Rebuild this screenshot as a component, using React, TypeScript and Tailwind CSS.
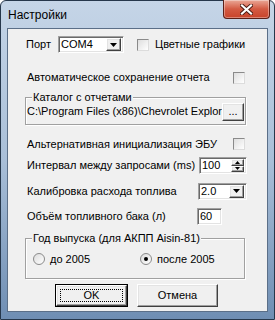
export default function App() {
  const sunken =
    "border border-t-[#a0a0a0] border-l-[#a0a0a0] border-r-white border-b-white shadow-[inset_1px_1px_0_#696969,inset_-1px_-1px_0_#e3e3e3] bg-white"
  const raised =
    "border border-t-white border-l-white border-r-[#404040] border-b-[#404040] shadow-[inset_-1px_-1px_0_#a0a0a0,inset_1px_1px_0_#e3e3e3] bg-[#f0f0f0]"
  const check =
    "w-[12px] h-[12px] border border-t-[#8a8a8a] border-l-[#8a8a8a] border-r-[#dcdcdc] border-b-[#dcdcdc] bg-gradient-to-br from-[#dedede] to-white"

  return (
    <div className="w-[275px] h-[320px] flex flex-col rounded-t-[6px] border border-[#26374b] bg-gradient-to-b from-[#c5d5e7] via-[#a9bfd8] to-[#6f8eb3] font-['Liberation_Sans',Arial,sans-serif] text-[11px] leading-none text-black">
      {/* Title bar */}
      <div className="relative h-[27px] flex items-center pl-[7px]">
        <span className="text-[12px] text-black">Настройки</span>
        <div className="absolute top-[-1px] right-[4px] w-[47px] h-[19px] rounded-b-[4px] border border-t-0 border-[#5b2018] bg-gradient-to-b from-[#e9a797] via-[#d35a43] to-[#c8432a] flex items-center justify-center shadow-[inset_0_0_0_1px_rgba(255,255,255,0.35)]">
          <svg width="13" height="11" viewBox="0 0 13 11">
            <path d="M2 1.5 L11 9.5 M11 1.5 L2 9.5" stroke="#4a1a12" strokeWidth="4" strokeLinecap="square" />
            <path d="M2 1.5 L11 9.5 M11 1.5 L2 9.5" stroke="white" strokeWidth="2.2" strokeLinecap="square" />
          </svg>
        </div>
      </div>

      {/* Client area */}
      <div className="mx-[6px] mb-[7px] flex-1 border border-[#5b6f88] bg-[#f0f0f0] flex flex-col">
        {/* Port row */}
        <div className="mt-[7px] h-[17px] flex items-center pl-[18px]">
          <span className="w-[32px]">Порт</span>
          <div className={`${sunken} w-[66px] h-[17px] flex items-center justify-between pl-[2px] pr-[2px]`}>
            <span>COM4</span>
            <div className={`${raised} w-[15px] h-[13px] flex items-center justify-center`}>
              <svg width="7" height="4" viewBox="0 0 7 4"><path d="M0 0 H7 L3.5 4 Z" fill="black" /></svg>
            </div>
          </div>
          <div className={`${check} ml-[13px]`} />
          <span className="ml-[6px]">Цветные графики</span>
        </div>

        {/* Auto save */}
        <div className="mt-[18px] h-[13px] flex items-center justify-between pl-[19px] pr-[22px]">
          <span>Автоматическое сохранение отчета</span>
          <div className={check} />
        </div>

        {/* Catalog group */}
        <div className="mt-[13px] ml-[17px] w-[221px] h-[28px] border border-[#a0a0a0] shadow-[inset_1px_1px_0_white,1px_1px_0_white] flex flex-col">
          <span className="-mt-[7px] ml-[6px] self-start bg-[#f0f0f0] px-[1px] h-[12px] leading-[12px]">Каталог с отчетами</span>
          <div className="h-[17px] flex items-center pl-[1px]">
            <span className="w-[195px] overflow-hidden whitespace-nowrap">C:\Program Files (x86)\Chevrolet Explorer</span>
            <div className={`${raised} w-[22px] h-[18px] flex items-center justify-center`}>...</div>
          </div>
        </div>

        {/* Alt init */}
        <div className="mt-[13px] h-[12px] flex items-center justify-between pl-[19px] pr-[22px]">
          <span>Альтернативная инициализация ЭБУ</span>
          <div className={check} />
        </div>

        {/* Interval */}
        <div className="mt-[7px] h-[17px] flex items-center justify-between pl-[19px] pr-[20px]">
          <span>Интервал между запросами (ms)</span>
          <div className={`${sunken} w-[48px] h-[17px] flex items-center justify-between pl-[2px] pr-[2px]`}>
            <span>100</span>
            <div className="w-[13px] h-[13px] flex flex-col">
              <div className={`${raised} flex-1 flex items-center justify-center`}>
                <svg width="5" height="3" viewBox="0 0 5 3"><path d="M0 3 H5 L2.5 0 Z" fill="black" /></svg>
              </div>
              <div className={`${raised} flex-1 flex items-center justify-center`}>
                <svg width="5" height="3" viewBox="0 0 5 3"><path d="M0 0 H5 L2.5 3 Z" fill="black" /></svg>
              </div>
            </div>
          </div>
        </div>

        {/* Calibration */}
        <div className="mt-[9px] h-[16px] flex items-center justify-between pl-[19px] pr-[20px]">
          <span>Калибровка расхода топлива</span>
          <div className={`${sunken} w-[49px] h-[17px] flex items-center justify-between pl-[2px] pr-[2px]`}>
            <span>2.0</span>
            <div className={`${raised} w-[15px] h-[13px] flex items-center justify-center`}>
              <svg width="7" height="4" viewBox="0 0 7 4"><path d="M0 0 H7 L3.5 4 Z" fill="black" /></svg>
            </div>
          </div>
        </div>

        {/* Tank */}
        <div className="mt-[9px] h-[16px] flex items-center pl-[19px]">
          <span className="w-[170px]">Объём топливного бака (л)</span>
          <div className={`${sunken} w-[25px] h-[17px] flex items-center pl-[2px]`}>
            <span>60</span>
          </div>
        </div>

        {/* Year group */}
        <div className="mt-[14px] ml-[17px] w-[220px] h-[41px] border border-[#a0a0a0] shadow-[inset_1px_1px_0_white,1px_1px_0_white] flex flex-col">
          <span className="-mt-[7px] ml-[6px] self-start bg-[#f0f0f0] px-[1px] h-[12px] leading-[12px]">Год выпуска (для АКПП Aisin-81)</span>
          <div className="mt-[9px] flex items-center pl-[7px]">
            <div className="w-[12px] h-[12px] rounded-full border border-[#8a8a8a] bg-gradient-to-br from-[#dcdcdc] to-white" />
            <span className="ml-[5px] w-[90px]">до 2005</span>
            <div className="w-[12px] h-[12px] rounded-full border border-[#8a8a8a] bg-gradient-to-br from-[#dcdcdc] to-white flex items-center justify-center">
              <div className="w-[4px] h-[4px] rounded-full bg-black" />
            </div>
            <span className="ml-[5px]">после 2005</span>
          </div>
        </div>

        {/* Buttons */}
        <div className="mt-[5px] flex pl-[47px] gap-[9px]">
          <div className="w-[73px] h-[23px] border border-black">
            <div className={`${raised} w-full h-full p-[3px]`}>
              <div className="w-full h-full border border-dotted border-black flex items-center justify-center">OK</div>
            </div>
          </div>
          <div className={`${raised} w-[81px] h-[23px] flex items-center justify-center`}>Отмена</div>
        </div>
      </div>
    </div>
  )
}
